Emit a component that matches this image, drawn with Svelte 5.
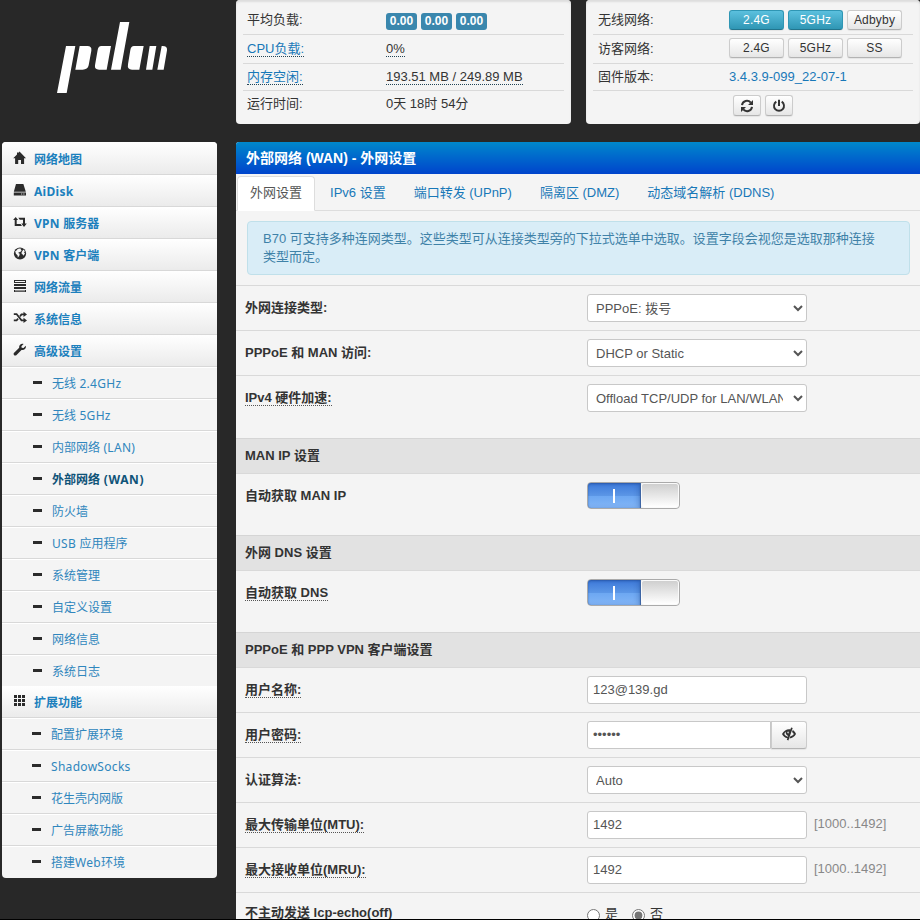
<script>
  const mainNav = [
    { icon: 'home', label: '网络地图' },
    { icon: 'hdd', label: 'AiDisk' },
    { icon: 'retweet', label: 'VPN 服务器' },
    { icon: 'globe', label: 'VPN 客户端' },
    { icon: 'tasks', label: '网络流量' },
    { icon: 'random', label: '系统信息' },
    { icon: 'wrench', label: '高级设置' }
  ];
  const advanced = [
    '无线 2.4GHz', '无线 5GHz', '内部网络 (LAN)', '外部网络 (WAN)', '防火墙',
    'USB 应用程序', '系统管理', '自定义设置', '网络信息', '系统日志'
  ];
  const extended = ['配置扩展环境', 'ShadowSocks', '花生壳内网版', '广告屏蔽功能', '搭建Web环境'];
  const tabs = ['外网设置', 'IPv6 设置', '端口转发 (UPnP)', '隔离区 (DMZ)', '动态域名解析 (DDNS)'];
  const activeSub = '外部网络 (WAN)';
  // Latin runs in the menu are tracked slightly wider than the Chinese text.
  const split = (s) => s.split(/([\x20-\x7e]+)/).filter(Boolean);
</script>

{#snippet menuText(label)}
  <span>{#each split(label) as part}<em class:latin={/[\x20-\x7e]/.test(part)}>{part}</em>{/each}</span>
{/snippet}

{#snippet icon(name)}
  <svg class="icon" width="14" height="14" viewBox="0 0 14 14" fill="currentColor" aria-hidden="true">
    {#if name === 'home'}
      <path d="M6.5 .6 13 7.3H11.1V13H8V9H5.2V13H2.1V7.3H.2L4 3.4V1.6H5.2V2.1Z" />
    {:else if name === 'hdd'}
      <path d="M3 1H10.4L12.8 8.7H.8Z" />
      <path fill-rule="evenodd" d="M.8 9.6H13V12.5H.8ZM8.2 10.5V11.4H9.2V10.5ZM10.4 10.5V11.4H11.4V10.5Z" />
    {:else if name === 'retweet'}
      <path d="M2.7 2 5.1 5H3.7V9H7.6L9 11H1.7V5H.1ZM5.3 2.8H12V8.5H13.8L11 12 8.3 8.5H10V4.8H6.8Z" />
    {:else if name === 'globe'}
      <circle cx="7" cy="6.5" r="6.1" />
      <path fill="#f5f5f5" d="M6.2 1.4 8.4 1.8 7.6 3 8.8 3.4 7.2 5 5.9 5.2 5.2 6.1 6.7 6.7 6.4 8.5 4.9 10.6 4.5 8.3 2.9 6.7 2.2 4.2 4.1 3.1 4.5 1.9ZM10.4 2.6 11.9 4.3 11 5.3 12 6.6 10.4 8.8 9.8 7.5 8.7 6.9 8.6 5.2Z" />
    {:else if name === 'tasks'}
      <path fill-rule="evenodd" d="M1 1H13V4H1ZM2 2V3H12V2ZM1 5H13V7H1ZM1 8H13V10H1ZM1 11H13V13H1ZM2 11.6V12.3H12V11.6Z" />
    {:else if name === 'random'}
      <path d="M.8 2.2H4L9 8.4H10.5V6.7L14 9.4 10.5 12V10.3H8.1L3.2 4.1H.8ZM.8 8.4H3.2L4.5 6.9 5.7 8.3 4 10.3H.8ZM6.4 4.6 8.1 2.4H10.5V.8L14 3.4 10.5 6V4.3H9L7.6 6.1Z" />
    {:else if name === 'wrench'}
      <path d="M12.8 2.8 10.5 5.1 8.7 4.8 8.4 3.3 10.6.9C8.2.1 5.7 1.8 6.2 4.7L.9 10C-.2 11.4 1.8 13.3 3.3 12.2L8.5 7C11.6 7.6 13.4 5.2 12.8 2.8Z" />
    {:else if name === 'th'}
      <path d="M1 1H4V4H1ZM5 1H8V4H5ZM9 1H12V4H9ZM1 5H4V8H1ZM5 5H8V8H5ZM9 5H12V8H9ZM1 9H4V12H1ZM5 9H8V12H5ZM9 9H12V12H9Z" />
    {:else if name === 'refresh'}
      <path fill="none" stroke="currentColor" stroke-width="2" d="M2 6.1C2.6 1.6 8 .5 10.8 3.6M12 7.9C11.4 12.4 6 13.5 3.2 10.4" />
      <path d="M13 1V6H8ZM1 13V8H6Z" />
    {:else if name === 'power'}
      <path d="M6 .8H8V7H6Z" />
      <path fill="none" stroke="currentColor" stroke-width="1.9" d="M4.3 2.6A5 5 0 1 0 9.7 2.6" />
    {:else if name === 'eye'}
      <path fill-rule="evenodd" d="M0 7C2 3.3 5.3 1.8 8.4 2.4L9.1.5 10.7 1.1 6.4 13.4 4.8 12.8 5.4 11.3C3 10.7 1 9.2 0 7ZM2.3 7C3 8.5 4.3 9.4 5.9 9.7L6.2 9C4.4 8.4 3.4 6.7 3.7 4.8 3.1 5.4 2.6 6.1 2.3 7ZM5.2 5.2 6 6.6 6.9 6 6.2 4.2Z" />
      <path d="M10.8 3C12.2 3.9 13.4 5.3 14 7 12.7 9.6 10.5 11.1 7.5 11.4L8.2 9.5C9.8 9.1 11 8.3 11.8 7 11.4 6.2 10.8 5.5 10 5Z" />
    {/if}
  </svg>
{/snippet}

{#snippet row(label, hint, content)}
  <div class="row">
    <div class="label"><span class:hint>{label}</span></div>
    <div class="control">{@render content()}</div>
  </div>
{/snippet}

{#snippet toggle()}
  <div class="switch"><div class="on"><i></i></div><div class="knob"></div></div>
{/snippet}

<div class="page">
  <aside>
    <div class="logo">
      <svg width="116" height="76" viewBox="165 60 348 228" fill="#fff" aria-label="pdan">
        <path d="M198 138H226L200 279H171ZM239 138H262Q276 138 274 152L266 196Q263 209 248 209H226ZM304 138H333L320 209H297Q283 209 285 196L293 150Q295 138 304 138ZM360 66H388L362 209H333ZM402 138H431L418 209H396Q381 209 384 193L391 150Q393 138 402 138ZM449 138H469L457 209H438ZM485 138Q503 137 501 151L491 209H472Z" />
      </svg>
    </div>
    <nav>
      {#each mainNav as item, i}
        <a class="item" class:first={i === 0}>{@render icon(item.icon)}{@render menuText(item.label)}</a>
      {/each}
      <div class="group">
        {#each advanced as label}
          <a class="sub" class:current={label === activeSub}><i></i>{@render menuText(label)}</a>
        {/each}
      </div>
      <a class="item">{@render icon('th')}{@render menuText('扩展功能')}</a>
      <div class="group ext">
        {#each extended as label}
          <a class="sub"><i></i>{@render menuText(label)}</a>
        {/each}
      </div>
    </nav>
  </aside>

  <main>
    <div class="status">
      <section class="card">
        <div class="line r1"><span class="key">平均负载:</span><span class="badges"><b>0.00</b><b>0.00</b><b>0.00</b></span></div>
        <div class="line r2"><span class="key"><u class="link">CPU负载:</u></span><u>0%</u></div>
        <div class="line r3"><span class="key"><u class="link">内存空闲:</u></span><u>193.51 MB / 249.89 MB</u></div>
        <div class="line r4"><span class="key">运行时间:</span><span>0天 18时 54分</span></div>
      </section>
      <section class="card wifi">
        <div class="line r1"><span class="key">无线网络:</span><div class="btns"><button class="info">2.4G</button><button class="info">5GHz</button><button>Adbyby</button></div></div>
        <div class="line r2"><span class="key">访客网络:</span><div class="btns"><button>2.4G</button><button>5GHz</button><button>SS</button></div></div>
        <div class="line r3"><span class="key">固件版本:</span><span class="link">3.4.3.9-099_22-07-1</span></div>
        <div class="line r4 tools"><span class="key"></span><div class="btns"><button>{@render icon('refresh')}</button><button>{@render icon('power')}</button></div></div>
      </section>
    </div>

    <section class="box">
      <h2>外部网络 (WAN) - 外网设置</h2>
      <div class="tabs">
        {#each tabs as tab, i}
          <a class:active={i === 0}>{tab}</a>
        {/each}
      </div>
      <div class="alert">B70 可支持多种连网类型。这些类型可从连接类型旁的下拉式选单中选取。设置字段会视您是选取那种连接<br />类型而定。</div>

      {#snippet connType()}<select><option>PPPoE: 拨号</option></select>{/snippet}
      {#snippet manAccess()}<select><option>DHCP or Static</option></select>{/snippet}
      {#snippet offload()}<select><option>Offload TCP/UDP for LAN/WLAN</option></select>{/snippet}
      {#snippet user()}<input type="text" value="123@139.gd" />{/snippet}
      {#snippet pass()}<div class="append"><input type="password" value="123456" /><button>{@render icon('eye')}</button></div>{/snippet}
      {#snippet auth()}<select><option>Auto</option></select>{/snippet}
      {#snippet mtu()}<input type="text" value="1492" /><span class="range">[1000..1492]</span>{/snippet}
      {#snippet echo()}<label><input type="radio" name="echo" />是</label><label><input type="radio" name="echo" checked />否</label>{/snippet}

      {@render row('外网连接类型:', false, connType)}
      {@render row('PPPoE 和 MAN 访问:', false, manAccess)}
      <div class="tall">{@render row('IPv4 硬件加速:', true, offload)}</div>
      <h3>MAN IP 设置</h3>
      <div class="auto">{@render row('自动获取 MAN IP', false, toggle)}</div>
      <h3>外网 DNS 设置</h3>
      <div class="auto">{@render row('自动获取 DNS', true, toggle)}</div>
      <h3>PPPoE 和 PPP VPN 客户端设置</h3>
      {@render row('用户名称:', true, user)}
      {@render row('用户密码:', true, pass)}
      {@render row('认证算法:', false, auth)}
      {@render row('最大传输单位(MTU):', true, mtu)}
      {@render row('最大接收单位(MRU):', true, mtu)}
      <div class="last">{@render row('不主动发送 lcp-echo(off)', false, echo)}</div>
    </section>
  </main>
</div>

<style>
  :global(body) { margin: 0; background: #282828; overflow: hidden; }
  * { box-sizing: border-box; }
  .page {
    display: flex; width: 920px; height: 920px; overflow: hidden;
    background: #282828; border-bottom: 1px solid #000; color: #333;
    font: 13px/20px "Liberation Sans", "Noto Sans CJK SC", sans-serif;
  }
  .icon { display: block; flex: none; }
  aside { width: 236px; flex: none; }
  .logo { height: 142px; padding: 20px 0 0 55px; }
  .logo svg { display: block; }
  nav {
    width: 215px; margin-left: 2px; border-radius: 4px; overflow: hidden; background: #f4f4f4;
    font: 12px/20px "Noto Sans", "Noto Sans CJK SC", sans-serif;
  }
  em { font-style: normal; white-space: pre; }
  .latin { letter-spacing: 0.3px; }
  .current .latin { letter-spacing: 0.6px; }
  .item {
    display: flex; height: 32px; padding: 0 0 0 11px; color: #1c80bd; font-weight: bold;
    background: linear-gradient(#fff, #ebebeb); border-bottom: 1px solid #d8d8d8;
  }
  .item.first { height: 33px; padding-top: 1px; }
  .item .icon { color: #2b2b2b; margin: 8px 7px 0 0; }
  .item span { padding-top: 7px; }
  .sub {
    display: flex; height: 32px; padding-left: 31px; color: #2f86bd;
    border-bottom: 1px solid #d8d8d8; border-top: 1px solid #fff;
  }
  .sub i { width: 9px; height: 3px; margin: 13px 10px 0 0; background: #2b2b2b; }
  .sub span { padding-top: 6px; }
  .sub.current { color: #0f5378; font-weight: bold; }
  .group { height: 319px; overflow: hidden; }
  .group.ext { height: 160px; }
  .ext .sub { padding-left: 30px; }
  .ext .sub:last-child { border-bottom: 0; }

  main { width: 684px; flex: none; }
  .status { display: flex; gap: 15px; height: 142px; }
  .card {
    width: 335px; height: 124px; padding: 0 7px; background: #f4f4f4;
    border-radius: 4px; box-shadow: inset 0 2px 2px #ddd;
  }
  .wifi { width: 334px; }
  .line { display: flex; padding-left: 5px; border-bottom: 1px solid #d9d9d9; }
  .card:first-child .line { padding-left: 4px; }
  .key { width: 139px; flex: none; }
  .wifi .key { width: 131px; }
  .r1 { height: 35px; padding-top: 10px; }
  .r2 { height: 29px; padding-top: 4px; }
  .r3 { height: 27px; padding-top: 3px; }
  .line.r4 { border: 0; padding-top: 3px; }
  .link { color: #1878b8; }
  u { display: inline-block; height: 18px; text-decoration: none; border-bottom: 1px dotted #245; }
  .badges { display: flex; gap: 4px; padding-top: 3px; }
  .badges b {
    width: 31px; height: 17px; border-radius: 3px; background: #3a87ad; color: #fff;
    font-size: 12px; line-height: 17px; text-align: center;
  }
  .btns { display: flex; gap: 4px; }
  button {
    width: 55px; height: 20px; padding: 0; border: 1px solid #ccc; border-bottom-color: #b3b3b3;
    border-radius: 3px; background: linear-gradient(#fff, #e6e6e6); color: #333;
    font: 12px/18px "Liberation Sans", sans-serif; letter-spacing: 0.2px; box-shadow: 0 1px 1px #0001;
  }
  .info { color: #fff; background: linear-gradient(#5bc0de, #2f96b4); border-color: #2f96b4 #2f96b4 #22758d; }
  .r2 button { margin-top: -1px; }
  .wifi .tools .key { width: 135px; }
  .tools button { width: 28px; height: 21px; margin-top: 1px; }
  .tools .icon { margin: 0 auto; }

  .box { height: 778px; overflow: hidden; background: #f4f4f4; border-top-left-radius: 3px; }
  h2, h3 { margin: 0; font-size: 13px; }
  h2 { height: 32px; padding-left: 10px; font-size: 14px; line-height: 33px; color: #fff; background: linear-gradient(#08c, #04c); }
  .tabs { display: flex; height: 37px; padding: 2px 0 0 1px; border-bottom: 1px solid #ddd; }
  .tabs a { height: 35px; margin-right: 2px; padding: 6px 12px 0; border: 1px solid transparent; color: #1878b8; white-space: nowrap; }
  .tabs .active { color: #555; background: #fff; border-color: #ddd; border-bottom-color: #fff; border-radius: 4px 4px 0 0; }
  .alert {
    width: 663px; height: 54px; margin: 10px 0 10px 11px; padding: 8px 0 0 15px; white-space: nowrap;
    background: #d9edf7; border: 1px solid #c0e0ea; border-radius: 4px; color: #3f82a8; line-height: 18px;
  }
  .row { display: flex; height: 45px; padding-left: 9px; border-top: 1px solid #d9d9d9; }
  .label { width: 342px; flex: none; padding-top: 12px; font-weight: bold; }
  .label span { display: inline-block; height: 18px; }
  .label .hint { border-bottom: 1px dotted #555; }
  .control { display: flex; padding-top: 8px; color: #555; }
  .tall .row { height: 63px; }
  .auto .row { height: 62px; }
  h3 { height: 35px; padding: 7px 0 0 9px; background: #e2e2e2; border-top: 1px solid #d5d5d5; }
  select, .control input {
    width: 220px; height: 28px; margin: 0; border: 1px solid #c8c8c8; border-radius: 3px; background: #fff;
    color: #555; font: inherit; outline: 0;
  }
  select { padding: 4px; }
  .tall select { padding-right: 7px; background-clip: padding-box; }
  .control input { padding: 3px 5px 5px; }
  .append { display: flex; }
  .append input { width: 184px; border-radius: 3px 0 0 3px; }
  .append button { width: 36px; height: 28px; border-left-width: 1px; border-radius: 0 3px 3px 0; margin: 0; }
  .append .icon { margin: -2px auto 0; }
  .range { padding: 3px 0 0 7px; color: #888; }
  .switch {
    display: flex; width: 93px; height: 27px; border-radius: 4px; border: 1px solid #aaa; overflow: hidden; background: #eee;
  }
  .on {
    width: 54px; margin: -1px 0 -1px -1px; border: 1px solid #3d65a4; border-radius: 4px 0 0 4px;
    background: linear-gradient(#3c78d8, #5b96e6 50%, #6ca7f2 51%, #83b6f6);
    box-shadow: inset 0 1px 2px #1d448a88, inset -3px 0 4px #1d448a33;
  }
  .on i { display: block; width: 2px; height: 14px; margin: 6px 0 0 25px; background: #fff; }
  .knob { flex: 1; border: 1px solid #fafafa; border-radius: 3px; background: linear-gradient(#cfcfcf, #fff); }
  .last .label { padding-top: 10px; }
  .last .control { padding-top: 11px; color: #333; }
  .last label { display: flex; width: 45px; gap: 5px; }
  .last input { width: 13px; height: 13px; margin: 5px 0 0; accent-color: #757575; }
</style>
